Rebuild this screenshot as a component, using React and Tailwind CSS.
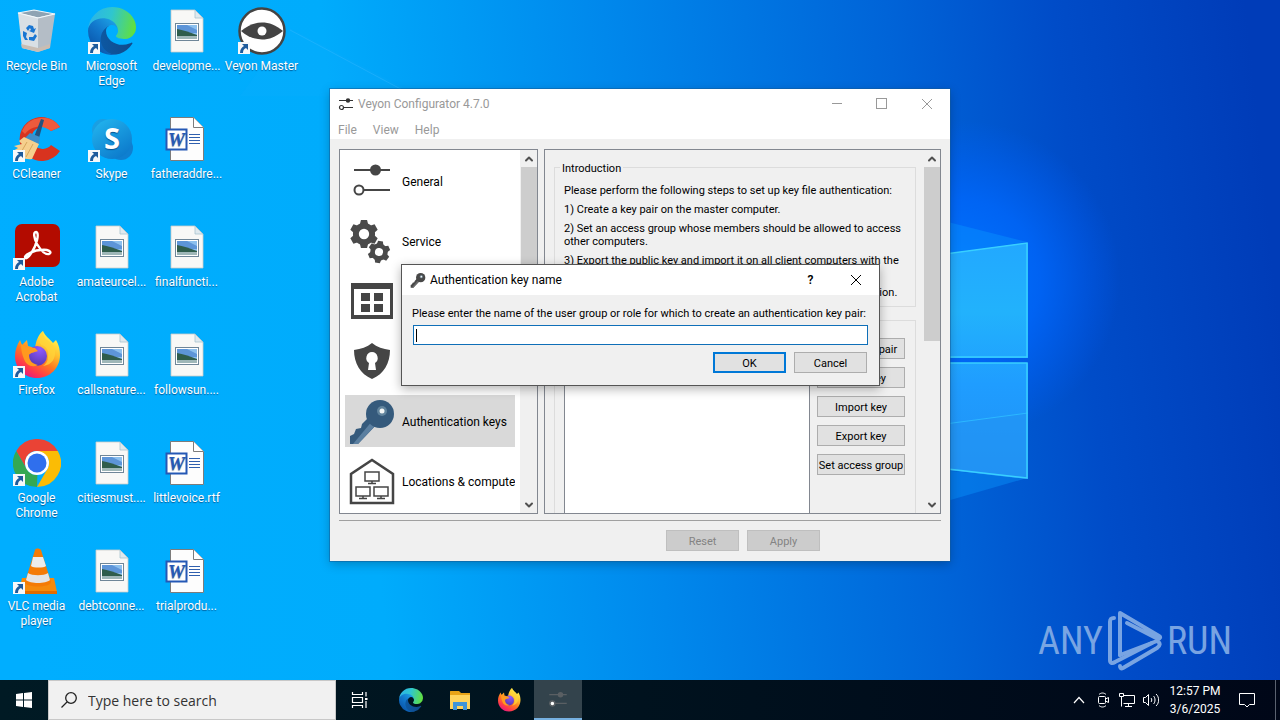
import { useState } from 'react'
import { ChevronUp, ChevronDown } from 'lucide-react'

const uiFont = "font-['Roboto','Noto_Sans',sans-serif]"

/* ---------- desktop icons, all on a 48x48 grid ---------- */

function ShortcutArrow() {
  return (
    <g>
      <rect x="0" y="35" width="12" height="12" fill="#f6f8fa" />
      <path d="M4 37h6v6l-2-2c-2 1-3 2-3 5H2c0-4 2-6 4-7z" fill="#1e5b9c" />
    </g>
  )
}

function Icon({ size = 'size-12', viewBox = '0 0 48 48', children }) {
  return <svg className={`${size} shrink-0`} viewBox={viewBox} fill="none" aria-hidden="true">{children}</svg>
}

function RecycleBinIcon() {
  return (
    <Icon>
      <path d="M5 6 21 3l21 4-17 4z" fill="#8ea3b3" stroke="#eef4f8" strokeWidth="1.2" />
      <path d="M5 6l20 5v34L9 41z" fill="#d9dfe4" />
      <path d="M42 7 25 11v34l12-4z" fill="#b4bdc6" />
      <path d="M5 6l20 5 17-4" stroke="#f5f9fc" strokeWidth="1" />
      <path d="M8 37l17 4 12-4v4L25 45 9 41z" fill="#c9bdb3" />
      <g fill="#1976d2">
        <path d="M13 21l3-3 4 1 1 3 2-1-2 5-5-2 2-1-1-2-2 3z" />
        <path d="M10 24l4 2-1 4 2 3h-3l-2-4z" />
        <path d="M16 30h4l2-3 2 2-3 5-5-1z" />
      </g>
    </Icon>
  )
}

function EdgeArt() {
  return (
    <g transform="translate(-4.63 -4.92)">
      <defs>
        <linearGradient id="edgeA" x1="63" y1="177" x2="241" y2="177" gradientUnits="userSpaceOnUse">
          <stop stopColor="#0c59a4" /><stop offset="1" stopColor="#114a8b" />
        </linearGradient>
        <linearGradient id="edgeB" x1="157" y1="100" x2="46" y2="222" gradientUnits="userSpaceOnUse">
          <stop stopColor="#1b9de2" /><stop offset=".5" stopColor="#1277cc" /><stop offset="1" stopColor="#0b5bb0" />
        </linearGradient>
        <linearGradient id="edgeC" x1="10" y1="60" x2="255" y2="120" gradientUnits="userSpaceOnUse">
          <stop stopColor="#2bb4e8" /><stop offset=".45" stopColor="#2fc6cf" /><stop offset="1" stopColor="#62e03c" />
        </linearGradient>
      </defs>
      <path fill="url(#edgeA)" d="M235.68 195.46a93.73 93.73 0 01-10.54 4.71 101.87 101.87 0 01-35.9 6.46c-47.32 0-88.54-32.55-88.54-74.32A31.48 31.48 0 01117.13 105c-42.8 1.8-53.8 46.4-53.8 72.53 0 73.88 68.09 81.37 82.76 81.37 7.91 0 19.84-2.3 27-4.56l1.31-.44a128.34 128.34 0 0066.6-52.8 4 4 0 00-5.32-5.64z" />
      <path fill="url(#edgeB)" d="M110.34 246.34A79.2 79.2 0 0187.6 225a80.72 80.72 0 0129.53-120c3.12-1.47 8.45-4.13 15.54-4a32.35 32.35 0 0125.69 13 31.88 31.88 0 016.36 18.66c0-.21 24.46-79.6-80-79.6-43.9 0-80 41.66-80 78.21a130.15 130.15 0 0012.11 56 128 128 0 00156.38 67.11 75.55 75.55 0 01-62.78-8z" />
      <path fill="url(#edgeC)" d="M156.94 153.78c-.81 1.05-3.3 2.5-3.3 5.66 0 2.61 1.7 5.12 4.72 7.23 14.38 10 41.49 8.68 41.56 8.68a59.56 59.56 0 0030.27-8.35 61.38 61.38 0 0030.43-52.88c.26-22.41-8-37.31-11.34-43.91C228.09 28.76 182.35 4.92 132.61 4.92a128 128 0 00-128 126.2c.48-36.54 36.8-66.05 80-66.05 3.5 0 23.46.34 42 10.07 16.34 8.58 24.9 18.94 30.85 29.21 6.18 10.67 7.28 24.15 7.28 29.52s-2.74 13.33-7.8 19.91z" />
    </g>
  )
}

function EdgeIcon() {
  return <Icon><g transform="scale(.1875)"><EdgeArt /></g><ShortcutArrow /></Icon>
}

function CCleanerIcon() {
  return (
    <Icon>
      <path d="M47 12A22 22 0 1 0 47 36l-9-6A11 11 0 1 1 38 16z" fill="#d8331f" />
      <path d="M47 12A22 22 0 0 0 9 16l3 3c7-9 18-9 26-3z" fill="#ee5a3c" />
      <path d="M28 4l3 1-5 18-5-1z" fill="#23527f" />
      <path d="M17 18l10 4-1 7-14-6z" fill="#3c8fcb" />
      <path d="M11 22l15 7-7 15c-6 1-14-2-19-8l5-3-4-2 8-2-3-3z" fill="#f5cf8d" />
      <path d="M14 27l-7 12M20 29l-7 13" stroke="#d6a65c" />
      <ShortcutArrow />
    </Icon>
  )
}

function SkypeIcon() {
  return (
    <Icon>
      <defs>
        <linearGradient id="sky" x1="10" y1="4" x2="38" y2="46" gradientUnits="userSpaceOnUse">
          <stop stopColor="#22b4ee" /><stop offset="1" stopColor="#0a74c8" />
        </linearGradient>
      </defs>
      <circle cx="15" cy="15" r="11" fill="#1a9fe2" />
      <circle cx="33" cy="33" r="12" fill="#0f7fd0" />
      <circle cx="24" cy="24" r="20" fill="url(#sky)" />
      <text x="24" y="34" textAnchor="middle" fontSize="29" fontWeight="700" fill="#fff" fontFamily="Open Sans, sans-serif">S</text>
      <ShortcutArrow />
    </Icon>
  )
}

function AcrobatIcon() {
  return (
    <Icon>
      <rect x="2" y="1" width="45" height="43" rx="7" fill="#b30b00" />
      <path
        d="M23 9c-3 0-2 6 1 12 3 5 8 11 12 10 4-2-1-5-8-4-6 0-15 4-16 7 0 3 4 0 7-5 4-6 8-19 4-20z"
        stroke="#fff" strokeWidth="2.4" strokeLinejoin="round"
      />
      <ShortcutArrow />
    </Icon>
  )
}

function FirefoxArt() {
  return (
    <g>
      <defs>
        <linearGradient id="ffA" x1="38" y1="4" x2="12" y2="46" gradientUnits="userSpaceOnUse">
          <stop stopColor="#fff44f" /><stop offset=".3" stopColor="#ffc02e" /><stop offset=".55" stopColor="#ff7a1f" /><stop offset=".8" stopColor="#ff3a4a" /><stop offset="1" stopColor="#e31587" />
        </linearGradient>
        <radialGradient id="ffB" cx="27" cy="18" r="16" gradientUnits="userSpaceOnUse">
          <stop stopColor="#9059ff" /><stop offset="1" stopColor="#5b3bb8" />
        </radialGradient>
      </defs>
      <path d="M30 0c2 5 7 8 10 12l3-3c3 5 4 10 4 15 0 13-10 23-23 23S2 37 2 25c0-6 2-11 5-16l2 5 5-5 1 6 7 2c1-7 3-13 8-17z" fill="url(#ffA)" />
      <circle cx="24" cy="25" r="10" fill="url(#ffB)" />
      <path d="M8 13l6 3 8 1 3 3c-3 1-8 2-9 4 0 6 4 9 9 10-6 3-12 0-14-6-2-5-3-9-3-15z" fill="#ff9a1f" />
      <path d="M28 14c6 1 8 6 7 12 0 4-2 7-5 9 9-1 13-8 12-16-1-5-5-8-8-10-3-2-4-5-4-9-4 4-5 9-2 14z" fill="#ffd43a" opacity=".75" />
    </g>
  )
}

function FirefoxIcon() {
  return <Icon><FirefoxArt /><ShortcutArrow /></Icon>
}

function ChromeIcon() {
  return (
    <Icon>
      <path d="M3.2 12A24 24 0 0 1 44.8 12H24a12 12 0 0 0-10.4 18z" fill="#ea4335" />
      <path d="M3.2 12 13.6 30A12 12 0 0 0 24 36h.4L24 48A24 24 0 0 1 3.2 12z" fill="#34a853" />
      <path d="M44.8 12A24 24 0 0 1 24 48l10.4-18A12 12 0 0 0 34 17.500L24 12z" fill="#fbbc05" />
      <circle cx="24" cy="24" r="12" fill="#fff" />
      <circle cx="24" cy="24" r="9.500" fill="#2f6fed" />
      <ShortcutArrow />
    </Icon>
  )
}

function VlcIcon() {
  return (
    <Icon>
      <path d="M9 31h32l3 14c0 2-1 2-3 2H8c-2 0-3-1-2-3z" fill="#f58a0c" />
      <path d="M5 44h39v3H6z" fill="#e06c00" />
      <path d="M22 3c0-2 5-2 6 0l10 32c0 6-26 6-26 0z" fill="#f47b06" />
      <path d="M20 10h10l3 9c-2 2-13 2-15 0z" fill="#ececec" />
      <path d="M15 26c4 3 16 3 20 0l2 7c-4 4-20 4-24 0z" fill="#e4e4e4" />
      <ShortcutArrow />
    </Icon>
  )
}

function PictureFileIcon() {
  return (
    <Icon>
      <path d="M8 3h24l8 8v34H8z" fill="#f8f8f6" stroke="#c9ccca" strokeWidth=".8" />
      <path d="M32 3v8h8z" fill="#dfe9ee" stroke="#a7c3cf" strokeWidth=".8" />
      <rect x="12.500" y="16.500" width="23" height="17" fill="#fff" stroke="#6f8698" />
      <rect x="14" y="18" width="20" height="14" fill="#8cc0ee" />
      <path d="M14 18h10l10 5v3H14z" fill="#5d95d8" />
      <path d="M14 22c6 1 12 3 20 6v1H14z" fill="#2f5d4c" />
      <path d="M14 29h20v3H14z" fill="#9fb7b8" />
    </Icon>
  )
}

function WordFileIcon() {
  return (
    <Icon>
      <path d="M7.500 2.500h23l10 10v33h-33z" fill="#fdfdfd" stroke="#7c7c7c" />
      <path d="M30.500 2.500v10h10" fill="#fff" stroke="#7c7c7c" />
      <rect x="3.500" y="14.500" width="20" height="20" fill="#fff" stroke="#2558b5" strokeWidth="2" />
      <text x="13.500" y="31" textAnchor="middle" fontSize="19" fontWeight="700" fontStyle="italic" fill="#2558b5" fontFamily="Liberation Serif, serif">W</text>
      <path d="M26 19.500h11M26 22.500h11M26 25.500h11M26 28.500h11" stroke="#2f5fae" />
    </Icon>
  )
}

function VeyonMasterIcon() {
  return (
    <Icon>
      <circle cx="24" cy="24" r="22.500" fill="#fff" stroke="#444" strokeWidth="2.500" />
      <path d="M3 24c7-6 14-8.500 21-8.500S38 18 45 24c-7 6-14 8.500-21 8.500S10 30 3 24z" fill="#444" />
      <circle cx="24" cy="24" r="4.500" fill="#fff" />
      <ShortcutArrow />
    </Icon>
  )
}

/* ---------- configurator icons ---------- */

function SlidersIcon({ size }) {
  return (
    <Icon size={size}>
      <path d="M6 13h36M16 33h26" stroke="#454545" strokeWidth="2" />
      <circle cx="27.500" cy="13" r="5.500" fill="#454545" />
      <circle cx="11" cy="33" r="4.500" fill="#fff" stroke="#454545" strokeWidth="2" />
    </Icon>
  )
}

/* bolder cut of the sliders for 16px use */
function SmallSlidersIcon({ size, color = '#333' }) {
  return (
    <Icon size={size} viewBox="0 0 16 16">
      <path d="M1 4.500h14M5 11.500h10" stroke={color} />
      <circle cx="10" cy="4.500" r="2.200" fill={color} />
      <circle cx="3.500" cy="11.500" r="2" fill="#fff" stroke={color} strokeWidth="1.200" />
    </Icon>
  )
}

function Gear({ cx, cy, r, turn }) {
  return (
    <g transform={`translate(${cx} ${cy}) rotate(${turn}) scale(${r})`}>
      {[0, 60, 120, 180, 240, 300].map(a => (
        <path key={a} transform={`rotate(${a})`} d="M-.34-.5-.22-1h.44L.34-.5z" fill="#4a4a4a" />
      ))}
      <circle r=".58" stroke="#4a4a4a" strokeWidth=".42" />
    </g>
  )
}

function GearsIcon() {
  return (
    <Icon>
      <Gear cx={16} cy={17} r={14} turn={0} />
      <Gear cx={31} cy={35} r={11} turn={8} />
    </Icon>
  )
}

function WindowGridIcon() {
  return (
    <Icon>
      <path d="M3 6h42v36H3z" fill="#454545" />
      <path d="M6 12h36v26H6z" fill="#fff" />
      <path d="M13 16h9v8h-9zM26 16h9v8h-9zM13 27h9v8h-9zM26 27h9v8h-9z" fill="#454545" />
    </Icon>
  )
}

function ShieldIcon() {
  return (
    <Icon>
      <path d="M24 6c5 4 11 6 18 7 0 13-6 24-18 29C12 37 6 26 6 13c7-1 13-3 18-7z" fill="#454545" />
      <path d="M24 15a6 6 0 0 1 3 11l1 7h-8l1-7a6 6 0 0 1 3-11z" fill="#fff" />
    </Icon>
  )
}

function KeyIcon({ size, head = '#355a7c', shaft = '#5b7fa0' }) {
  return (
    <Icon size={size}>
      <path d="M22 19l7 8L10 47H2v-8l4-2 2-5 5-1 1-4z" fill={head} />
      <path d="M25 23l4 4L10 47H5z" fill={shaft} />
      <circle cx="32" cy="17" r="14" fill={head} />
      <circle cx="34" cy="14" r="5" fill="#7fa0b4" opacity=".6" />
      <circle cx="34" cy="14" r="2.500" fill="#f2f5f5" />
    </Icon>
  )
}

function Monitor({ x, y }) {
  return (
    <g transform={`translate(${x} ${y})`} stroke="#454545" strokeWidth="1.500">
      <rect width="14" height="9" />
      <path d="M7 9v2M3 11.500h8" />
    </g>
  )
}

function LocationsIcon() {
  return (
    <Icon>
      <path d="M3 46V17L24 3l21 14v29z" stroke="#454545" strokeWidth="2.500" fill="#fff" />
      <Monitor x={17} y={15} />
      <Monitor x={8} y={30} />
      <Monitor x={26} y={30} />
    </Icon>
  )
}

/* ---------- data ---------- */

const shortcuts = [
  { label: 'Recycle Bin', Art: RecycleBinIcon },
  { label: 'CCleaner', Art: CCleanerIcon },
  { label: 'Adobe Acrobat', Art: AcrobatIcon },
  { label: 'Firefox', Art: FirefoxIcon },
  { label: 'Google Chrome', Art: ChromeIcon },
  { label: 'VLC media player', Art: VlcIcon },
  { label: 'Microsoft Edge', Art: EdgeIcon },
  { label: 'Skype', Art: SkypeIcon },
  { label: 'amateurcel...', Art: PictureFileIcon },
  { label: 'callsnature...', Art: PictureFileIcon },
  { label: 'citiesmust....', Art: PictureFileIcon },
  { label: 'debtconne...', Art: PictureFileIcon },
  { label: 'developme...', Art: PictureFileIcon },
  { label: 'fatheraddre...', Art: WordFileIcon },
  { label: 'finalfuncti...', Art: PictureFileIcon },
  { label: 'followsun....', Art: PictureFileIcon },
  { label: 'littlevoice.rtf', Art: WordFileIcon },
  { label: 'trialprodu...', Art: WordFileIcon },
  { label: 'Veyon Master', Art: VeyonMasterIcon },
]

const pages = [
  { name: 'General', Art: SlidersIcon },
  { name: 'Service', Art: GearsIcon },
  { name: 'Master', Art: WindowGridIcon },
  { name: 'Access control', Art: ShieldIcon },
  { name: 'Authentication keys', Art: KeyIcon },
  { name: 'Locations & computers', Art: LocationsIcon },
]

const steps = [
  'Please perform the following steps to set up key file authentication:',
  '1) Create a key pair on the master computer.',
  '2) Set an access group whose members should be allowed to access other computers.',
  '3) Export the public key and import it on all client computers with the same name.',
  '4) Select the key file method on all the computers for authentication.',
]

const keyActions = ['Create key pair', 'Delete key', 'Import key', 'Export key', 'Set access group']

/* ---------- desktop ---------- */

function Wallpaper() {
  return (
    <svg className="absolute inset-0 size-full" viewBox="0 0 1280 720" preserveAspectRatio="xMidYMid slice" aria-hidden="true">
      <defs>
        <linearGradient id="sea" x1="0" y1="0" x2="1280" y2="0" gradientUnits="userSpaceOnUse" gradientTransform="rotate(-6 640 360)">
          <stop offset="0" stopColor="#00aeff" />
          <stop offset=".28" stopColor="#00acfc" />
          <stop offset=".5" stopColor="#0088ec" />
          <stop offset=".72" stopColor="#0064d8" />
          <stop offset=".85" stopColor="#004cc8" />
          <stop offset="1" stopColor="#003cb8" />
        </linearGradient>
        <radialGradient id="glow" cx="960" cy="280" r="160" gradientUnits="userSpaceOnUse">
          <stop stopColor="#0074ff" /><stop offset=".5" stopColor="#0068ff" stopOpacity=".75" /><stop offset="1" stopColor="#0060ff" stopOpacity="0" />
        </radialGradient>
        <linearGradient id="pane" x1="0" y1="240" x2="0" y2="480" gradientUnits="userSpaceOnUse">
          <stop stopColor="#22a8ff" /><stop offset=".3" stopColor="#22b2fc" /><stop offset=".6" stopColor="#1f9dff" /><stop offset="1" stopColor="#2090f4" />
        </linearGradient>
      </defs>
      <rect width="1280" height="720" fill="url(#sea)" />
      <rect width="1280" height="720" fill="url(#glow)" />
      <path d="M290 28 420 96H240z" fill="#1cb0ff" opacity=".12" />
      <path d="M290 30 410 94" stroke="#3ab8ff" strokeOpacity=".4" />
      <path d="M940 220l87 22-87 12zM940 470l87 8-87 25z" fill="#0a98ff" opacity=".4" />
      <path d="M930 256l98-13v115h-98zM930 363h98v116l-98-11z" fill="url(#pane)" />
      <path d="M930 426l98-13v66l-98-11z" fill="#2294f2" opacity=".55" />
      <path d="M930 426l98-13" stroke="#2cb8ff" />
      <path d="M930 256l97-13v114h-97M930 363h97v115l-97-11" fill="none" stroke="#38d0ff" strokeWidth="1.500" />
    </svg>
  )
}

function Shortcut({ label, Art }) {
  return (
    <button className={`flex flex-col items-center gap-1 pt-[7px] ${uiFont} text-xs leading-[15px] text-white [text-shadow:0_1px_1px_rgb(0_40_90/0.6)]`}>
      <Art />
      <span className="max-w-[74px] text-center">{label}</span>
    </button>
  )
}

function Watermark() {
  return (
    <div className="absolute right-12 bottom-2 flex items-center gap-1 font-['Roboto_Condensed','Liberation_Sans_Narrow',sans-serif] text-[38px] leading-none text-[#86aee6] opacity-90">
      <span>ANY</span>
      <svg className="h-[62px] w-14" viewBox="0 0 56 62" fill="none" stroke="currentColor" strokeWidth="4" strokeLinejoin="round" strokeLinecap="round" aria-hidden="true">
        <path d="M7 8C4 8 3 9 3 12v38c0 3 2 4 5 2l37-19" />
        <path d="M13 45V3l39 23c2 1 1 3-1 3L20 13" />
        <path d="M13 45 50 31c4 2 3 5 0 7L16 58c-2 1-3 0-3-2" />
      </svg>
      <span>RUN</span>
    </div>
  )
}

/* ---------- widgets ---------- */

function ScrollBar({ thumb }) {
  return (
    <div className="flex w-[17px] shrink-0 flex-col bg-[#f0f0f0]">
      <button aria-label="Scroll up" className="flex h-[17px] shrink-0 items-center justify-center"><ChevronUp className="size-3 text-[#505050]" strokeWidth={4} /></button>
      <div className="min-h-0 flex-1 pl-px"><div className={`${thumb} bg-[#cdcdcd]`} /></div>
      <button aria-label="Scroll down" className="flex h-[17px] shrink-0 items-center justify-center"><ChevronDown className="size-3 text-[#505050]" strokeWidth={4} /></button>
    </div>
  )
}

function PushButton({ children, className = 'w-[73px] border border-[#adadad] bg-[#e1e1e1]', ...rest }) {
  return (
    <button className={`flex h-[21px] items-center justify-center pt-[2px] whitespace-nowrap ${className}`} {...rest}>{children}</button>
  )
}

function CrossIcon() {
  return <svg className="size-3" viewBox="0 0 12 12" stroke="currentColor" fill="none" aria-hidden="true"><path d="M1 1l10 10M11 1 1 11" /></svg>
}

function Configurator() {
  const [page, setPage] = useState('Authentication keys')

  return (
    <section className={`absolute top-[89px] left-[330px] flex h-[472px] w-[620px] flex-col bg-[#f0f0f0] shadow-[0_0_0_1px_rgb(20_90_150/0.5),0_3px_10px_rgb(0_0_0/0.25)] ${uiFont} text-[11px] leading-[13px] text-black`}>
      <header className="bg-white text-xs leading-4 text-[#999]">
        <div className="flex h-[29px] items-center pl-2">
          <SmallSlidersIcon size="size-4" />
          <h1 className="flex-1 pl-1">Veyon Configurator 4.7.0</h1>
          <button aria-label="Minimize" className="flex w-[45px] justify-center"><span className="h-px w-[10px] bg-[#999]" /></button>
          <button aria-label="Maximize" className="flex w-[45px] justify-center"><span className="size-[11px] border border-[#999]" /></button>
          <button aria-label="Close" className="flex w-[46px] justify-center"><CrossIcon /></button>
        </div>
        <nav className="flex h-[21px] items-center gap-4 pt-[2px] pl-2">
          <button>File</button>
          <button>View</button>
          <button>Help</button>
        </nav>
      </header>

      <div className="flex min-h-0 flex-1 gap-[6px] px-[9px] pt-[10px]">
        <nav className="flex w-[199px] shrink-0 overflow-hidden border border-[#828790] bg-white">
          <ul className="flex min-w-0 flex-1 flex-col gap-2 p-[5px] text-xs">
            {pages.map(({ name, Art }) => (
              <li key={name}>
                <button
                  onClick={() => setPage(name)}
                  className={`flex h-[52px] w-full items-center gap-[6px] overflow-hidden pl-[3px] whitespace-nowrap ${page === name ? 'bg-[#d9d9d9]' : ''}`}
                >
                  <Art />
                  <span className="pt-[2px]">{name}</span>
                </button>
              </li>
            ))}
          </ul>
          <ScrollBar thumb="h-3/5" />
        </nav>

        <main className="flex min-w-0 flex-1 border border-[#828790]">
          <div className="flex min-w-0 flex-1 flex-col gap-[13px] overflow-hidden pt-[10px] pr-[7px] pl-[9px]">
            <fieldset className="border border-[#dcdcdc] px-[9px] pb-[7px]">
              <legend className="-ml-1 px-[2px] pt-[2px]">Introduction</legend>
              <div className="flex flex-col gap-[6px] pt-[9px]">
                {steps.map(s => <p key={s}>{s}</p>)}
              </div>
            </fieldset>
            <div className="flex h-80 shrink-0 gap-[7px] border border-[#dcdcdc] py-2 pr-[10px] pl-[9px]">
              <div className="flex-1 border border-[#828790] bg-white" />
              <div className="flex w-[88px] flex-col gap-2 pt-[9px]">
                {keyActions.map(a => (
                  <PushButton key={a} className="w-[88px] border border-[#adadad] bg-[#e1e1e1]">{a}</PushButton>
                ))}
              </div>
            </div>
          </div>
          <ScrollBar thumb="h-[53%]" />
        </main>
      </div>

      <footer className="mx-[9px] mt-[6px] flex h-[41px] justify-end gap-2 border-t border-[#a0a0a0] pt-[9px] pr-[121px] text-[#838383]">
        <PushButton disabled className="w-[73px] border border-[#bfbfbf] bg-[#cccccc]">Reset</PushButton>
        <PushButton disabled className="w-[73px] border border-[#bfbfbf] bg-[#cccccc]">Apply</PushButton>
      </footer>
    </section>
  )
}

function KeyNameDialog() {
  const [name, setName] = useState('')

  return (
    <section role="dialog" aria-labelledby="dialog-title" className={`absolute top-[264px] left-[401px] w-[479px] border border-[#555] bg-[#f0f0f0] shadow-[0_3px_10px_rgb(0_0_0/0.3)] ${uiFont} text-[11px] leading-[13px] text-black`}>
      <header className="flex h-[30px] items-center bg-white pl-2 text-xs">
        <KeyIcon size="size-4" head="#484848" shaft="#6a6a6a" />
        <h2 id="dialog-title" className="flex-1 pl-1">Authentication key name</h2>
        <button aria-label="Help" className="w-[45px] font-semibold">?</button>
        <button aria-label="Close" className="flex w-[46px] justify-center"><CrossIcon /></button>
      </header>
      <form className="flex flex-col px-[11px] pt-3 pb-3" onSubmit={e => e.preventDefault()}>
        <label htmlFor="key-name" className="-ml-px whitespace-nowrap">Please enter the name of the user group or role for which to create an authentication key pair:</label>
        <div className="mt-[5px] flex h-5 items-center border border-[#0f6fb8] bg-white px-[2px]">
          <span className="h-[13px] w-px bg-black" />
          <input id="key-name" value={name} onChange={e => setName(e.target.value)} className="min-w-0 flex-1 outline-none" />
        </div>
        <div className="mt-[7px] flex justify-end gap-2 pr-px">
          <PushButton className="w-[73px] border-2 border-[#0078d7] bg-[#e1e1e1]">OK</PushButton>
          <PushButton type="button">Cancel</PushButton>
        </div>
      </form>
    </section>
  )
}

/* ---------- taskbar ---------- */

function Taskbar() {
  return (
    <footer className={`relative flex h-10 items-stretch bg-gradient-to-r from-[#001a24] via-[#00121e] to-[#000718] text-white ${uiFont}`}>
      <button aria-label="Start" className="flex w-12 items-center justify-center">
        <svg className="size-4" viewBox="0 0 16 16" fill="#fff" aria-hidden="true"><path d="M0 2l7-1v6.500H0zM8 1l8-1v7.500H8zM0 8.500h7V15l-7-1zM8 8.500h8V16l-8-1z" /></svg>
      </button>
      <label className="flex w-72 items-center gap-[11px] border border-[#c8c8c8] bg-[#f1f1f1] pl-3 text-[#333]">
        <svg className="size-4" viewBox="0 0 16 16" fill="none" stroke="#222" strokeWidth="1.300" aria-hidden="true"><circle cx="10" cy="6" r="5.300" /><path d="M6 10 .5 15.500" /></svg>
        <input type="text" aria-label="Search" placeholder="Type here to search" className="min-w-0 flex-1 pt-[2px] font-['Open_Sans',sans-serif] text-sm outline-none placeholder:text-[#333]" />
      </label>
      <div className="flex gap-px">
        <button aria-label="Task View" className="mr-[2px] flex w-12 items-center justify-center">
          <svg className="size-[18px]" viewBox="0 0 18 18" fill="none" stroke="#fff" strokeWidth="1.200" aria-hidden="true">
            <path d="M1.500 1v2.500h10V1M1.500 17v-2.500h10V17M1.500 6.500h10v5h-10zM15 1v4.500M15 10v7" /><path d="M14 7h2.500v2H14z" fill="#fff" stroke="none" />
          </svg>
        </button>
        <button aria-label="Microsoft Edge" className="flex w-12 items-center justify-center">
          <Icon size="size-6" viewBox="0 0 256 256"><EdgeArt /></Icon>
        </button>
        <button aria-label="File Explorer" className="flex w-12 items-center justify-center">
          <Icon size="size-6" viewBox="0 0 24 24">
            <path d="M2 4c0-1 0-1 1-1h8l2 2h9v3H2z" fill="#e8a317" />
            <path d="M2 7h20v14H2z" fill="#ffd35c" />
            <path d="M5 14h14v8h-4v-4H9v4H5z" fill="#3f94d8" />
          </Icon>
        </button>
        <button aria-label="Firefox" className="flex w-12 items-center justify-center">
          <Icon size="size-6"><FirefoxArt /></Icon>
        </button>
        <button aria-label="Veyon Configurator" className="flex w-12 items-center justify-center border-b-2 border-[#76b0e0] bg-[#33434c]">
          <SmallSlidersIcon size="size-5" color="#5a5f63" />
        </button>
      </div>

      <div className="ml-auto flex items-center">
        <div className="flex items-center gap-2">
          <button aria-label="Show hidden icons" className="flex w-4 justify-center">
            <svg className="h-2 w-3" viewBox="0 0 12 8" fill="none" stroke="#fff" strokeWidth="1.200" aria-hidden="true"><path d="M1 7l5-5.500L11 7" /></svg>
          </button>
          <svg className="size-4" viewBox="0 0 16 16" fill="none" stroke="#fff" aria-hidden="true"><rect x="3.500" y="4.500" width="7" height="7" rx="1" /><path d="M10.500 7l3-1.500v5l-3-1.500M4 2.500c2-2 5-2 7 0M4 13.500c2 2 5 2 7 0" /></svg>
          <svg className="size-4" viewBox="0 0 16 16" fill="none" stroke="#fff" aria-hidden="true"><path d="M5 3.500h10.500v8H4.500M9.500 11.500v3M6 14.500h7M.5 1.500h4v3h-4zM2.500 4.500v10" /></svg>
          <svg className="size-4" viewBox="0 0 16 16" fill="none" stroke="#fff" aria-hidden="true"><path d="M.5 5.500h2l3-3v11l-3-3h-2zM8 6c1 1 1 3 0 4M10.500 4c2 2 2 6 0 8M13 2c3.500 3 3.500 9 0 12" /></svg>
        </div>
        <div className="w-[72px] text-center text-xs leading-[18px]">
          <div>12:57 PM</div>
          <div>3/6/2025</div>
        </div>
        <button aria-label="Notifications" className="flex w-8 justify-center">
          <svg className="size-4" viewBox="0 0 16 16" fill="none" stroke="#fff" aria-hidden="true"><path d="M.5 1.500h15v11h-5L8 15l-2.500-2.500h-5z" /></svg>
        </button>
        <div className="ml-3 h-10 w-[5px] border-l border-[#5a6270]" />
      </div>
    </footer>
  )
}

export default function App() {
  return (
    <div className="relative flex h-screen flex-col overflow-hidden bg-[#0078e0]">
      <Wallpaper />
      <div className="relative flex-1">
        <div className="-ml-px grid w-max auto-cols-[75px] grid-flow-col grid-rows-[repeat(6,108px)]">
          {shortcuts.map(s => <Shortcut key={s.label} {...s} />)}
        </div>
        <Watermark />
        <Configurator />
        <KeyNameDialog />
      </div>
      <Taskbar />
    </div>
  )
}
